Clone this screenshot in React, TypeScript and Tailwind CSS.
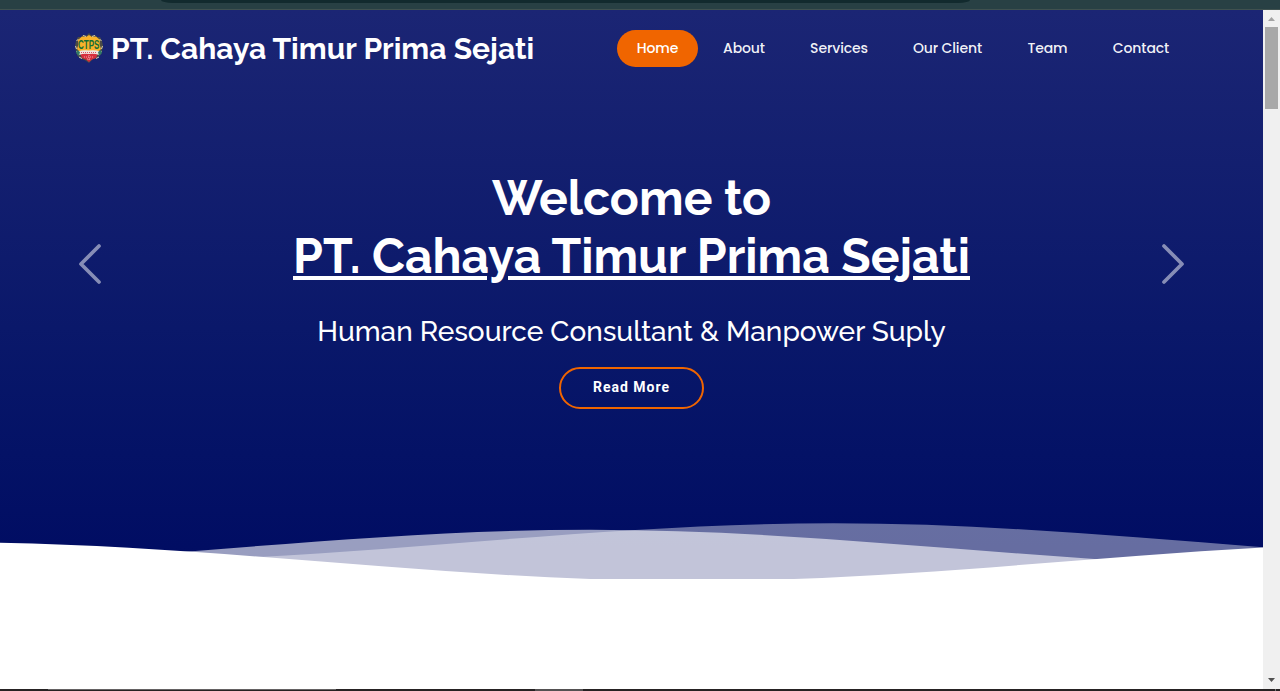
const WAVE = "M-160 44c30 0 58-18 88-18s58 18 88 18 58-18 88-18 58 18 88 18v44h-352z";

const navItems = [
  { label: "Home", box: "w-[81px] bg-[#f06500] text-white" },
  { label: "About", box: "ml-[6px] w-[80px]" },
  { label: "Services", box: "ml-[6px] w-[98px]" },
  { label: "Our Client", box: "ml-[5px] w-[109px]" },
  { label: "Team", box: "ml-[7px] w-[77px]" },
  { label: "Contact", box: "ml-[8px] w-[94px]" },
];

function Crest() {
  return (
    <svg className="mb-[2px] h-[30px] w-[30px] shrink-0 overflow-visible" viewBox="0 0 30 30">
      <path d="M15 0l2.500 2.500L21 2l2 2h3l2 4 1 5-1 5-1.500 4-4 3-4 1.500L15 30l-3.500-2.500-4-1.500-4-3L2 18l-1-5 1-5 2-4h3l2-2 3.500.5z" fill="#4b4c45" />
      <path d="M2.500 8l2-2M27.500 8l-2-2M1.500 13l1 3M28.500 13l-1 3M2.500 18l2 3M27.500 18l-2 3M5 24l3 1.500M25 24l-3 1.500M9 2.500l3 1M21 2.500l-3 1" stroke="#d8cfb5" fill="none" />
      <path d="M15 2l3 2 4-.5 4 3.500-.5 4 1.500 5-3 3H6l-3-3 1.500-5L4 7l4-3.500 4 .5z" fill="#f8b22b" />
      <path d="M6 20h18l-2 5-4 1.500-3 2.500-3-2.500L8 25z" fill="#d62f3d" />
      <path d="M4 18.500q5-2 11-1 6-1 11 1l-1 3.500q-5-2-10-1-5-1-10 1z" fill="#f0e6e1" />
      <path d="M7 19.500h16" stroke="#d95560" strokeDasharray="1 1" />
      <path d="M3 17l3 2-1 4-3-3zM27 17l-3 2 1 4 3-3z" fill="#327a67" />
      <path d="M10 24h10M13 26h4M15 22v5" stroke="#f1a7a6" strokeDasharray="1 1" />
      <g fill="#146e35" fontFamily="Liberation Sans, sans-serif" fontWeight="700" fontSize="12">
        <text x="4" y="15.500" textLength="21.500" lengthAdjust="spacingAndGlyphs">CTPS</text>
      </g>
    </svg>
  );
}

function Chevron({ flip = false }: { flip?: boolean }) {
  return (
    <svg className={flip ? "h-[42px] w-6 rotate-180" : "h-[42px] w-6"} viewBox="0 0 24 42" fill="none" stroke="#fff" strokeOpacity=".5" strokeWidth="3.700" strokeLinecap="round" strokeLinejoin="round">
      <path d="M21 3L3 21l18 18" />
    </svg>
  );
}

function Waves() {
  return (
    <svg className="block h-[60px] w-full" viewBox="0 24 150 28" preserveAspectRatio="none">
      <path d={WAVE} transform="translate(-5 0)" fill="#fff" fillOpacity=".4" />
      <path d={WAVE} transform="translate(-33.900 3)" fill="#fff" fillOpacity=".6" />
      <path d={WAVE} transform="translate(66.200 8.900)" fill="#fff" />
    </svg>
  );
}

export default function App() {
  return (
    <div className="flex h-[691px] w-[1280px] flex-col overflow-hidden bg-white">
      <div className="h-[10px] shrink-0 border-b border-[#40514f] bg-[#284044]">
        <div className="ml-[161px] h-[3px] w-[809px] bg-[#122a2e] [border-radius:0_0_12px_12px/0_0_3px_3px]" />
      </div>
      <div className="flex h-[679px] shrink-0">
        <main className="w-[1263px] bg-white">
          <section className="flex h-[569px] flex-col bg-linear-to-b from-[#1b2574] to-[#000b62] text-white">
            <header className="flex h-[77px] shrink-0 items-center pl-[74px]">
              <div className="flex w-[543px] items-center">
                <Crest />
                <h1 className="ml-[7px] font-['Raleway','Lato',sans-serif] text-[30px] leading-9 font-bold whitespace-nowrap">PT. Cahaya Timur Prima Sejati</h1>
              </div>
              <nav className="flex items-center font-['Poppins','Inter',sans-serif] text-[14px] font-medium tracking-[-0.12px] text-white/95">
                {navItems.map((item) => (
                  <a key={item.label} className={`${item.box} flex h-[37px] items-center justify-center rounded-full whitespace-nowrap`}>
                    {item.label}
                  </a>
                ))}
              </nav>
            </header>
            <div className="flex flex-1 justify-between pr-[78px] pl-[78px]">
              <div className="pt-[156px]"><Chevron /></div>
              <div className="flex flex-col items-center pt-[82px] font-['Raleway','Lato',sans-serif]">
                <h2 className="text-center text-[48px] leading-[58px] font-bold whitespace-nowrap">
                  <span className="block">Welcome to</span>
                  <span className="block underline decoration-[4px] underline-offset-[3px]">PT. Cahaya Timur Prima Sejati</span>
                </h2>
                <p className="mt-[30px] text-[28px] leading-[34px] font-medium whitespace-nowrap">Human Resource Consultant &amp; Manpower Suply</p>
                <a className="mt-[18px] flex h-[42px] w-[145px] items-center justify-center rounded-full border-2 border-[#f06500] pb-[2px] font-['Roboto',sans-serif] text-[14px] font-bold tracking-[1px]">Read More</a>
              </div>
              <div className="pt-[156px]"><Chevron flip /></div>
            </div>
            <Waves />
          </section>
        </main>
        <aside className="flex w-[17px] flex-col items-center bg-[#f0f0f0]">
          <svg className="h-[17px] w-[17px] shrink-0" viewBox="0 0 17 17"><path d="M5 11h7L8.500 7z" fill="#a3a3a3" /></svg>
          <div className="mr-[2px] h-[82px] w-[13px] self-end bg-[#a8a8a8]" />
          <svg className="mt-auto h-[17px] w-[17px] shrink-0" viewBox="0 0 17 17"><path d="M5 6h7l-3.500 4z" fill="#505050" /></svg>
        </aside>
      </div>
      <div className="flex h-[2px] shrink-0 bg-[#262223]">
        <div className="ml-[48px] h-px w-[288px] bg-[#656263]" />
        <div className="ml-[199px] h-[2px] w-[48px] bg-[#545152]" />
        <div className="ml-[692px] h-[2px] w-px bg-[#777]" />
      </div>
    </div>
  );
}
